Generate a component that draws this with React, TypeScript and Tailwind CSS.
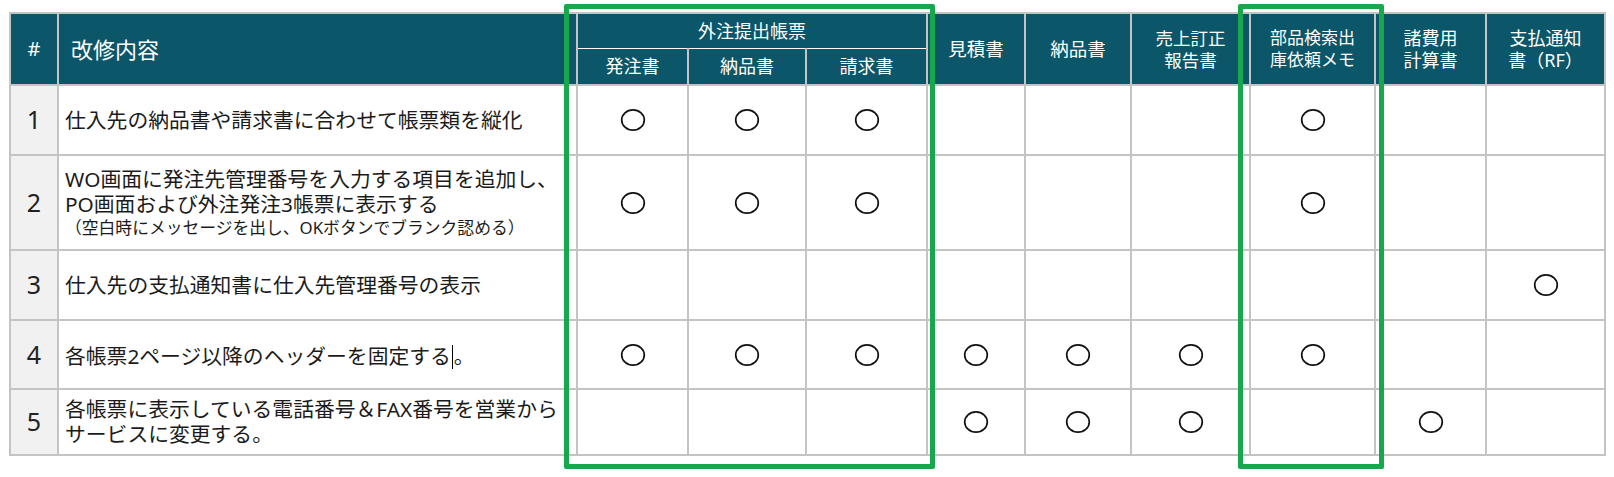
const FONT = "font-['Noto_Sans','Noto_Sans_CJK_JP',sans-serif]";

type Row = { n: number; lines: { text: string; small?: boolean; caret?: boolean }[]; marks: number[]; h: string };

const ROWS: Row[] = [
  { n: 1, h: "h-[70px]", lines: [{ text: "仕入先の納品書や請求書に合わせて帳票類を縦化" }], marks: [1, 1, 1, 0, 0, 0, 1, 0, 0] },
  {
    n: 2,
    h: "h-[95px]",
    lines: [
      { text: "WO画面に発注先管理番号を入力する項目を追加し、" },
      { text: "PO画面および外注発注3帳票に表示する" },
      { text: "（空白時にメッセージを出し、OKボタンでブランク認める）", small: true },
    ],
    marks: [1, 1, 1, 0, 0, 0, 1, 0, 0],
  },
  { n: 3, h: "h-[70px]", lines: [{ text: "仕入先の支払通知書に仕入先管理番号の表示" }], marks: [0, 0, 0, 0, 0, 0, 0, 0, 1] },
  { n: 4, h: "h-[69px]", lines: [{ text: "各帳票2ページ以降のヘッダーを固定する", caret: true }], marks: [1, 1, 1, 1, 1, 1, 1, 0, 0] },
  {
    n: 5,
    h: "h-[66px]",
    lines: [{ text: "各帳票に表示している電話番号＆FAX番号を営業から" }, { text: "サービスに変更する。" }],
    marks: [0, 0, 0, 1, 1, 1, 0, 1, 0],
  },
];

const COL_WIDTHS = ["w-[48px]", "w-[519px]", "w-[111px]", "w-[118px]", "w-[121px]", "w-[98px]", "w-[106px]", "w-[119px]", "w-[125px]", "w-[111px]", "w-[119px]"];

function Mark() {
  return (
    <svg width="26" height="24" viewBox="0 0 26 24" className="mx-auto block">
      <ellipse cx="13" cy="12" rx="11.3" ry="10.2" fill="none" stroke="#111" strokeWidth="1.7" />
    </svg>
  );
}

const th = "border-2 border-[#c4c4c4] bg-[#0b5668] font-normal text-white";

export default function App() {
  return (
    <div className={`${FONT} min-h-[477px] bg-white`}>
      <div className="relative pl-[9px] pt-[12px]">
        <table className="table-fixed border-collapse text-[#1b1b1b]">
          <colgroup>
            {COL_WIDTHS.map((w, i) => (
              <col key={i} className={w} />
            ))}
          </colgroup>
          <thead>
            <tr className="h-[35px]">
              <th rowSpan={2} className={`${th} text-[20px]`}>#</th>
              <th rowSpan={2} className={`${th} pl-[12px] text-left text-[22px]`}>改修内容</th>
              <th colSpan={3} className={`${th} border-b border-b-white text-[18px] leading-none`}>外注提出帳票</th>
              <th rowSpan={2} className={`${th} text-[18.5px]`}>見積書</th>
              <th rowSpan={2} className={`${th} text-[18.5px]`}>納品書</th>
              <th rowSpan={2} className={`${th} text-[17.5px] leading-[22px]`}>売上訂正<br />報告書</th>
              <th rowSpan={2} className={`${th} text-[17px] leading-[22px]`}>部品検索出<br />庫依頼メモ</th>
              <th rowSpan={2} className={`${th} text-[18px] leading-[22px]`}>諸費用<br />計算書</th>
              <th rowSpan={2} className={`${th} text-[18px] leading-[22px]`}>支払通知<br />書（RF）</th>
            </tr>
            <tr className="h-[37px]">
              <th className={`${th} border-t border-t-white text-[18px] leading-none`}>発注書</th>
              <th className={`${th} border-t border-t-white text-[18px] leading-none`}>納品書</th>
              <th className={`${th} border-t border-t-white text-[18px] leading-none`}>請求書</th>
            </tr>
          </thead>
          <tbody>
            {ROWS.map((row) => (
              <tr key={row.n} className={row.h}>
                <td className="border-2 border-[#c4c4c4] bg-[#f1f1f1] text-center text-[25px] text-[#222]">{row.n}</td>
                <td className="border-2 border-[#c4c4c4] pl-[6px] align-middle">
                  {row.lines.map((line, i) => (
                    <div
                      key={i}
                      className={line.small ? "text-[16.8px] leading-[22px]" : "text-[20.8px] leading-[25px]"}
                    >
                      {line.text}
                      {line.caret && (
                        <>
                          <span className="mx-px inline-block h-[24px] w-px translate-y-[5px] bg-black" />
                          。
                        </>
                      )}
                    </div>
                  ))}
                </td>
                {row.marks.map((m, i) => (
                  <td key={i} className="border-2 border-[#c4c4c4] text-center">
                    {m ? <Mark /> : null}
                  </td>
                ))}
              </tr>
            ))}
          </tbody>
        </table>

        <div className="pointer-events-none absolute left-[564px] top-[4px] h-[465px] w-[371px] rounded-[2px] border-[5px] border-[#17a74c]" />
        <div className="pointer-events-none absolute left-[1238px] top-[4px] h-[465px] w-[146px] rounded-[2px] border-[5px] border-[#17a74c]" />
      </div>
    </div>
  );
}
